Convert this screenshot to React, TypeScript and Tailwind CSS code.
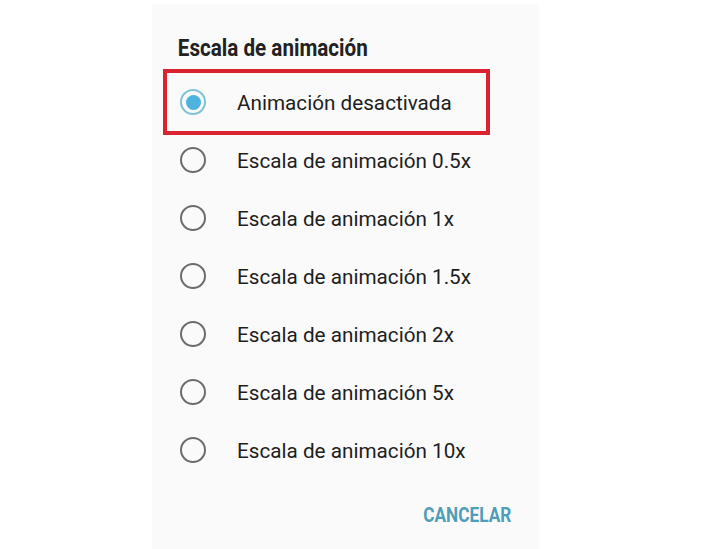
const options = [
  "Animación desactivada",
  "Escala de animación 0.5x",
  "Escala de animación 1x",
  "Escala de animación 1.5x",
  "Escala de animación 2x",
  "Escala de animación 5x",
  "Escala de animación 10x",
];

function Radio({ checked }: { checked: boolean }) {
  if (checked) {
    return (
      <span className="flex h-[26px] w-[26px] shrink-0 items-center justify-center rounded-full border-2 border-[#7fc2d6]">
        <span className="h-[15px] w-[15px] rounded-full bg-[#4db3df]" />
      </span>
    );
  }
  return (
    <span className="h-[26px] w-[26px] shrink-0 rounded-full border-2 border-[#6c6c6c]" />
  );
}

export default function App() {
  return (
    <div
      className="h-[549px] w-[709px] overflow-hidden bg-white"
      style={{ fontFamily: "Roboto, 'Noto Sans', sans-serif" }}
    >
      <div className="ml-[152px] mt-[4px] flex h-[545px] w-[387px] flex-col bg-[#fafafa]">
        {/* Title - condensed look */}
        <h2 className="origin-left scale-x-[0.86] pl-[30px] pt-[32px] text-[24px] font-bold leading-[25px] text-[#222]">
          Escala de animación
        </h2>

        {/* Options */}
        <div className="mt-[12px] flex flex-col">
          {options.map((label, idx) => (
            <div
              key={label}
              className="relative flex h-[58px] items-center pl-[28px]"
            >
              <Radio checked={idx === 0} />
              <span className="ml-[31px] pt-[2px] text-[20.7px] leading-none text-[#1e1e1e]">
                {label}
              </span>
              {idx === 0 && (
                <span className="pointer-events-none absolute left-[11px] top-[-4px] h-[66px] w-[327px] border-4 border-[#d9232f]" />
              )}
            </div>
          ))}
        </div>

        {/* Actions */}
        <div className="mt-[26px] flex justify-end pr-[28px]">
          <button
            type="button"
            className="origin-right scale-x-[0.86] text-[20px] font-bold leading-none text-[#4f9db8]"
          >
            CANCELAR
          </button>
        </div>
      </div>
    </div>
  );
}
